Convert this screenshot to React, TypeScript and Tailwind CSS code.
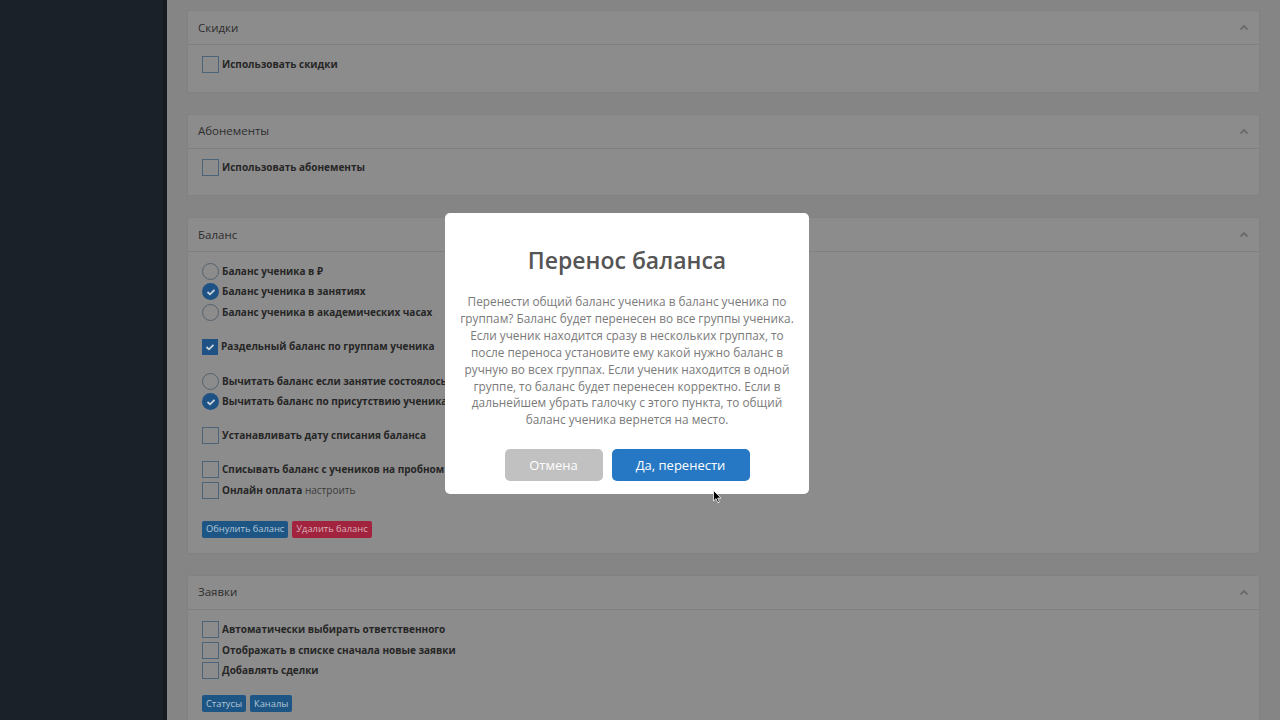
import { ReactNode } from "react";

const font = { fontFamily: '"Open Sans", "Noto Sans", sans-serif' };

const ChevronUp = () => (
  <svg width="10" height="7" viewBox="0 0 10 7" className="text-[#6b6b6b]">
    <polyline points="1.5,5.5 5,2 8.5,5.5" fill="none" stroke="currentColor" strokeWidth="1.8" />
  </svg>
);

const Check = () => (
  <svg width="10" height="8" viewBox="0 0 10 8">
    <polyline points="1.5,4 4,6.3 8.5,1.8" fill="none" stroke="#c9d3dc" strokeWidth="1.8" />
  </svg>
);

const Box = ({ checked = false }: { checked?: boolean }) =>
  checked ? (
    <span className="flex h-[16px] w-[16px] shrink-0 items-center justify-center bg-[#1e5284]">
      <Check />
    </span>
  ) : (
    <span className="h-[17px] w-[17px] shrink-0 border border-[#4d6378] bg-[#8c8c8c]" />
  );

const Radio = ({ checked = false }: { checked?: boolean }) =>
  checked ? (
    <span className="flex h-[17px] w-[17px] shrink-0 items-center justify-center rounded-full bg-[#1e5284]">
      <Check />
    </span>
  ) : (
    <span className="h-[17px] w-[17px] shrink-0 rounded-full border border-[#55626e] bg-[#8c8c8c]" />
  );

const Row = ({ control, children }: { control: ReactNode; children: ReactNode }) => (
  <div className="flex h-[20.5px] items-center text-[10px] font-bold text-[#262626]">
    {control}
    <span className="ml-[3px] whitespace-nowrap">{children}</span>
  </div>
);

const Card = ({ title, children, bodyClass }: { title: string; children: ReactNode; bodyClass: string }) => (
  <div className="rounded-[2px] border border-[#828282] bg-[#8c8c8c]">
    <div className="flex h-[34px] items-center justify-between border-b border-[#808080] pl-[10px] pr-[10px]">
      <span className="text-[11.5px] text-[#2c2c2c]">{title}</span>
      <ChevronUp />
    </div>
    <div className={bodyClass}>{children}</div>
  </div>
);

const SmallBtn = ({ children, red = false }: { children: ReactNode; red?: boolean }) => (
  <span
    className={`flex h-[17px] items-center rounded-[2px] px-[4px] text-[9.3px] ${
      red ? "bg-[#a2233e] text-[#d9b3bb]" : "bg-[#1d5685] text-[#b4c7d8]"
    }`}
  >
    {children}
  </span>
);

export default function App() {
  return (
    <div className="relative flex h-[720px] w-[1280px] overflow-hidden bg-[#858585]" style={font}>
      {/* Sidebar */}
      <div className="h-full w-[167px] shrink-0 border-r-[4px] border-[#161b21] bg-[#1b2129]" />

      {/* Content */}
      <div className="flex flex-1 flex-col gap-[21px] px-[20px] pt-[10px]">
        <Card title="Скидки" bodyClass="pl-[14px] pt-[9px] pb-[17px]">
          <Row control={<Box />}>Использовать скидки</Row>
        </Card>

        <Card title="Абонементы" bodyClass="pl-[14px] pt-[9px] pb-[17px]">
          <Row control={<Box />}>Использовать абонементы</Row>
        </Card>

        <Card title="Баланс" bodyClass="pl-[14px] pt-[9px] pb-[15px]">
          <Row control={<Radio />}>Баланс ученика в ₽</Row>
          <Row control={<Radio checked />}>Баланс ученика в занятиях</Row>
          <Row control={<Radio />}>Баланс ученика в академических часах</Row>
          <div className="mt-[14px]">
            <Row control={<Box checked />}>Раздельный баланс по группам ученика</Row>
          </div>
          <div className="mt-[14px]">
            <Row control={<Radio />}>Вычитать баланс если занятие состоялось</Row>
            <Row control={<Radio checked />}>Вычитать баланс по присутствию ученика</Row>
          </div>
          <div className="mt-[13.5px]">
            <Row control={<Box />}>Устанавливать дату списания баланса</Row>
          </div>
          <div className="mt-[13.5px]">
            <Row control={<Box />}>Списывать баланс с учеников на пробном занятии</Row>
            <Row control={<Box />}>
              Онлайн оплата <span className="font-normal text-[#3a3a3a]">настроить</span>
            </Row>
          </div>
          <div className="mt-[20px] flex gap-[4px]">
            <SmallBtn>Обнулить баланс</SmallBtn>
            <SmallBtn red>Удалить баланс</SmallBtn>
          </div>
        </Card>

        <Card title="Заявки" bodyClass="pl-[14px] pt-[10px] pb-[14px]">
          <Row control={<Box />}>Автоматически выбирать ответственного</Row>
          <Row control={<Box />}>Отображать в списке сначала новые заявки</Row>
          <Row control={<Box />}>Добавлять сделки</Row>
          <div className="mt-[14px] flex gap-[4px]">
            <SmallBtn>Статусы</SmallBtn>
            <SmallBtn>Каналы</SmallBtn>
          </div>
        </Card>
      </div>

      {/* Modal */}
      <div className="absolute left-[445px] top-[213px] flex h-[281px] w-[364px] flex-col items-center rounded-[5px] bg-white pt-[31px]">
        <h2 className="text-[23px] font-semibold leading-[32px] text-[#555555]">Перенос баланса</h2>
        <p className="mt-[17px] text-center text-[11.8px] leading-[16.9px] text-[#7a7a7a]">
          Перенести общий баланс ученика в баланс ученика по
          <br />
          группам? Баланс будет перенесен во все группы ученика.
          <br />
          Если ученик находится сразу в нескольких группах, то
          <br />
          после переноса установите ему какой нужно баланс в
          <br />
          ручную во всех группах. Если ученик находится в одной
          <br />
          группе, то баланс будет перенесен корректно. Если в
          <br />
          дальнейшем убрать галочку с этого пункта, то общий
          <br />
          баланс ученика вернется на место.
        </p>
        <div className="mt-[21px] flex gap-[9px]">
          <button className="h-[32px] w-[98px] rounded-[5px] bg-[#c1c1c1] text-[13px] text-white">Отмена</button>
          <button className="h-[32px] w-[138px] rounded-[5px] bg-[#2778c4] text-[13px] text-white">Да, перенести</button>
        </div>
      </div>

      {/* Cursor */}
      <svg className="absolute left-[713px] top-[490px]" width="9" height="14" viewBox="0 0 9 14">
        <path d="M0.5 0.5 L0.5 11 L3 8.6 L4.8 12.8 L6.4 12.1 L4.7 8.1 L8 8.1 Z" fill="#000" stroke="#fff" strokeWidth="0.8" />
      </svg>
    </div>
  );
}
